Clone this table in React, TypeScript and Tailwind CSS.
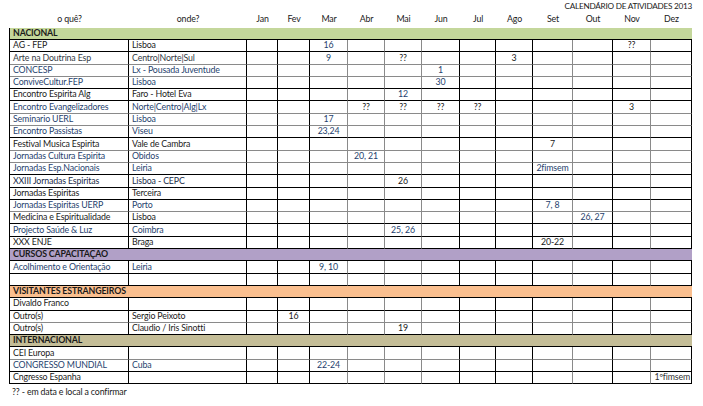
import React from 'react';

type Row = {
  name: string;
  place?: string;
  color?: string;
  grayBottom?: boolean;
  marks?: Record<number, [string, string?]>;
};

type Section = {
  title: string;
  band: string;
  rows: Row[];
};

const months = ['Jan', 'Fev', 'Mar', 'Abr', 'Mai', 'Jun', 'Jul', 'Ago', 'Set', 'Out', 'Nov', 'Dez'];

const NAVY = 'text-[#1f3f6e]';
const DARK = 'text-[#1a1a1a]';

const sections: Section[] = [
  {
    title: 'NACIONAL',
    band: 'bg-[#c4d79b]',
    rows: [
      { name: 'AG - FEP', place: 'Lisboa', color: DARK, marks: { 2: ['16', NAVY], 10: ['??'] } },
      { name: 'Arte na Doutrina Esp', place: 'Centro|Norte|Sul', color: 'text-[#333a44]', grayBottom: true, marks: { 2: ['9', NAVY], 4: ['??'], 7: ['3'] } },
      { name: 'CONCESP', place: 'Lx - Pousada Juventude', color: NAVY, grayBottom: true, marks: { 5: ['1', NAVY] } },
      { name: 'ConviveCultur.FEP', place: 'Lisboa', color: NAVY, marks: { 5: ['30', NAVY] } },
      { name: 'Encontro Espirita Alg', place: 'Faro - Hotel Eva', color: DARK, marks: { 4: ['12', NAVY] } },
      { name: 'Encontro Evangelizadores', place: 'Norte|Centro|Alg|Lx', color: NAVY, grayBottom: true, marks: { 3: ['??'], 4: ['??'], 5: ['??'], 6: ['??'], 10: ['3'] } },
      { name: 'Seminario UERL', place: 'Lisboa', color: NAVY, grayBottom: true, marks: { 2: ['17', NAVY] } },
      { name: 'Encontro Passistas', place: 'Viseu', color: NAVY, marks: { 2: ['23,24', NAVY] } },
      { name: 'Festival Musica Espirita', place: 'Vale de Cambra', color: DARK, grayBottom: true, marks: { 8: ['7'] } },
      { name: 'Jornadas Cultura Espirita', place: 'Obidos', color: NAVY, grayBottom: true, marks: { 3: ['20, 21', NAVY] } },
      { name: 'Jornadas Esp.Nacionais', place: 'Leiria', color: NAVY, marks: { 8: ['2fimsem', NAVY] } },
      { name: 'XXIII Jornadas Espiritas', place: 'Lisboa - CEPC', color: 'text-[#1b2c4a]', marks: { 4: ['26'] } },
      { name: 'Jornadas Espiritas', place: 'Terceira', color: DARK },
      { name: 'Jornadas Espiritas UERP', place: 'Porto', color: NAVY, grayBottom: true, marks: { 8: ['7, 8', NAVY] } },
      { name: 'Medicina e Espiritualidade', place: 'Lisboa', color: DARK, marks: { 9: ['26, 27', NAVY] } },
      { name: 'Projecto Saúde & Luz', place: 'Coimbra', color: NAVY, marks: { 4: ['25, 26', NAVY] } },
      { name: 'XXX ENJE', place: 'Braga', color: DARK, marks: { 8: ['20-22'] } },
    ],
  },
  {
    title: 'CURSOS CAPACITAÇAO',
    band: 'bg-[#b1a0c7]',
    rows: [
      { name: 'Acolhimento e Orientação', place: 'Leiria', color: NAVY, marks: { 2: ['9, 10', NAVY] } },
      { name: '', place: '' },
    ],
  },
  {
    title: 'VISITANTES ESTRANGEIROS',
    band: 'bg-[#fabf8f]',
    rows: [
      { name: 'Divaldo Franco', place: '', color: DARK },
      { name: 'Outro(s)', place: 'Sergio Peixoto', color: DARK, grayBottom: true, marks: { 1: ['16'] } },
      { name: 'Outro(s)', place: 'Claudio / Iris Sinotti', color: DARK, marks: { 4: ['19'] } },
    ],
  },
  {
    title: 'INTERNACIONAL',
    band: 'bg-[#c4bd97]',
    rows: [
      { name: 'CEI Europa', place: '', color: DARK, grayBottom: true },
      { name: 'CONGRESSO MUNDIAL', place: 'Cuba', color: NAVY, marks: { 2: ['22-24', NAVY] } },
      { name: 'Cngresso Espanha', place: '', color: DARK, marks: { 11: ['1ºfimsem', 'text-[#333333]'] } },
    ],
  },
];

// months whose right edge is drawn in gray
const grayRight = [2, 3, 4, 8, 10];

const gridCols = 'grid-cols-[119px_118px_31px_32px_38px_37px_37px_38px_36px_37px_40px_40px_38px_41px]';

function TableRow({ row }: { row: Row }) {
  const bottom = row.grayBottom ? 'border-b-[#8a8a8a]' : 'border-b-black';
  return (
    <>
      <div className={`flex items-center border-r border-b border-r-black ${bottom} pl-[3px] whitespace-nowrap ${row.color ?? DARK}`}>
        {row.name}
      </div>
      <div className={`flex items-center border-r border-b border-r-black ${bottom} pl-[3px] whitespace-nowrap ${row.color ?? DARK}`}>
        {row.place}
      </div>
      {months.map((m, i) => {
        const mark = row.marks?.[i];
        const right = grayRight.includes(i) ? 'border-r-[#8a8a8a]' : 'border-r-black';
        return (
          <div
            key={m}
            className={`flex items-center border-r border-b ${right} ${bottom} whitespace-nowrap ${
              i === 11 ? 'justify-end pr-[1px]' : 'justify-center'
            } ${mark?.[1] ?? 'text-[#1a1a1a]'}`}
          >
            {mark?.[0]}
          </div>
        );
      })}
    </>
  );
}

export default function App() {
  return (
    <div className="w-[703px] h-[406px] bg-white font-['Lato',sans-serif] text-[8.8px] tracking-[-0.15px] leading-none text-black overflow-hidden">
      <div className="h-[12px] flex items-center justify-end pr-[11px] text-[8.2px] tracking-[-0.25px] text-[#1a1a1a]">
        CALENDÁRIO DE ATIVIDADES 2013
      </div>
      <div className={`grid ${gridCols} ml-[10px] h-[15.7px] items-center text-center text-[#1a1a1a]`}>
        <div>o quê?</div>
        <div>onde?</div>
        {months.map((m) => (
          <div key={m}>{m}</div>
        ))}
      </div>
      <div className={`grid ${gridCols} auto-rows-[12.3px] ml-[9px] w-[683px] border-l border-black`}>
        {sections.map((s) => (
          <React.Fragment key={s.title}>
            <div className={`col-span-14 flex items-center pl-[3px] font-bold border-b border-black ${s.band} text-[#1a1a1a]`}>
              {s.title}
            </div>
            {s.rows.map((r, i) => (
              <TableRow key={i} row={r} />
            ))}
          </React.Fragment>
        ))}
      </div>
      <div className="pl-[12px] pt-[2px] h-[14px] flex items-center text-[#1a1a1a]">?? - em data e local a confirmar</div>
    </div>
  );
}
